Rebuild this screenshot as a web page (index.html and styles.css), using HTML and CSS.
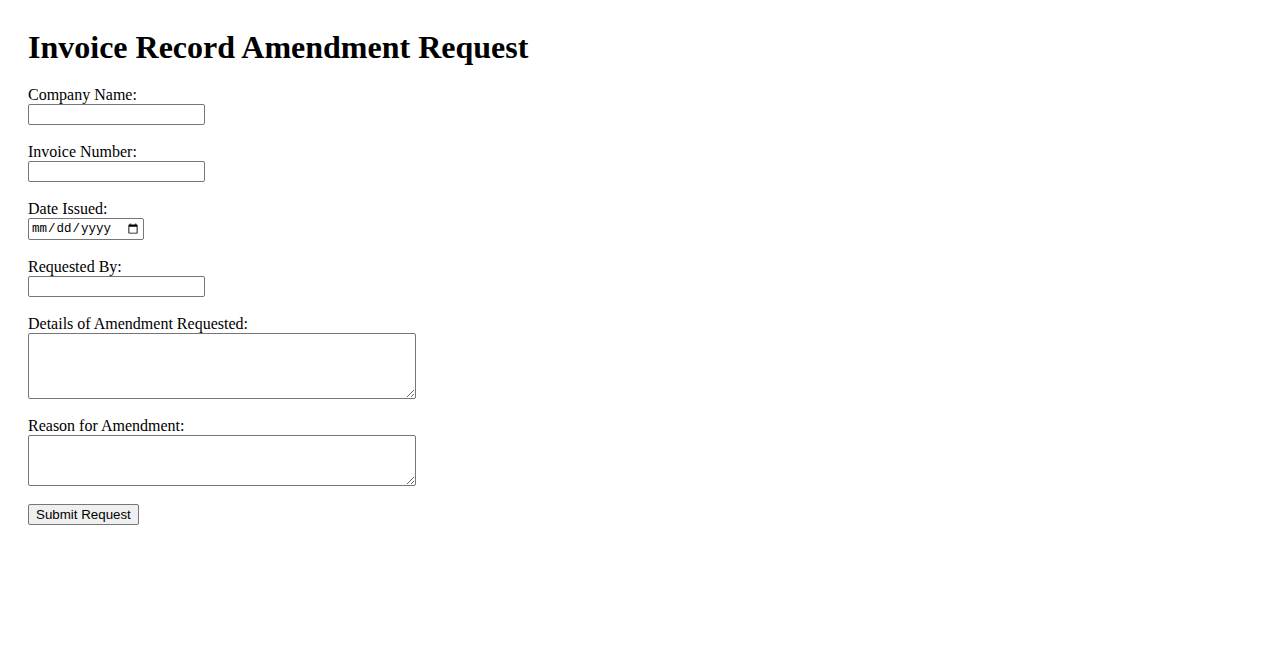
FILE: index.html
```html
<!DOCTYPE html>
<html lang="en">
<head>
<meta charset="utf-8">
<title>Invoice Record Amendment Request</title>
<link rel="stylesheet" href="styles.css">
</head>
<body>
<div class="page">
  <h1 class="title">Invoice Record Amendment Request</h1>
  <form class="form">
    <div class="field">
      <label class="label" for="company">Company Name:</label>
      <input class="text-input" type="text" id="company">
    </div>
    <div class="field">
      <label class="label" for="invoice">Invoice Number:</label>
      <input class="text-input" type="text" id="invoice">
    </div>
    <div class="field">
      <label class="label" for="date">Date Issued:</label>
      <input class="date-input" type="date" id="date">
    </div>
    <div class="field">
      <label class="label" for="requested">Requested By:</label>
      <input class="text-input" type="text" id="requested">
    </div>
    <div class="field">
      <label class="label" for="details">Details of Amendment Requested:</label>
      <textarea class="area area-tall" id="details"></textarea>
    </div>
    <div class="field">
      <label class="label" for="reason">Reason for Amendment:</label>
      <textarea class="area area-short" id="reason"></textarea>
    </div>
    <div class="field">
      <button class="submit" type="submit">Submit Request</button>
    </div>
  </form>
</div>
</body>
</html>
```

FILE: styles.css
```css
html, body {
  background: #ffffff;
}
body {
  margin: 8px;
  font-family: "Liberation Serif", "Times New Roman", serif;
  font-size: 16px;
  color: #000000;
}
.page {
  padding: 0 20px;
}
.title {
  font-size: 32px;
  font-weight: bold;
  margin: 21px 0 20.2px 0;
  line-height: 36.8px;
}
.form {
  display: flex;
  flex-direction: column;
  align-items: flex-start;
  gap: 18px;
}
.field {
  display: flex;
  flex-direction: column;
  align-items: flex-start;
}
.label {
  display: block;
  line-height: 18px;
}
.text-input,
.date-input,
.area {
  box-sizing: border-box;
  display: block;
  margin: 0;
  border: 1px solid #767676;
  border-radius: 2px;
  background: #ffffff;
  font-family: "Liberation Sans", Arial, sans-serif;
  font-size: 13.333px;
  padding: 1px 2px;
}
.text-input {
  width: 177px;
  height: 21px;
}
.date-input {
  width: 116px;
  height: 22px;
  font-family: "Liberation Mono", "Courier New", monospace;
  font-size: 12.5px;
}
.area {
  width: 388px;
  padding: 2px;
  font-family: "Liberation Mono", monospace;
  resize: both;
}
.area-tall {
  height: 66px;
}
.area-short {
  height: 51px;
}
.submit {
  box-sizing: border-box;
  margin: 0;
  height: 21px;
  padding: 1px 7px;
  border: 1px solid #767676;
  border-radius: 2px;
  background: #efefef;
  color: #000000;
  font-family: "Liberation Sans", Arial, sans-serif;
  font-size: 13.333px;
  line-height: 17px;
}
```
